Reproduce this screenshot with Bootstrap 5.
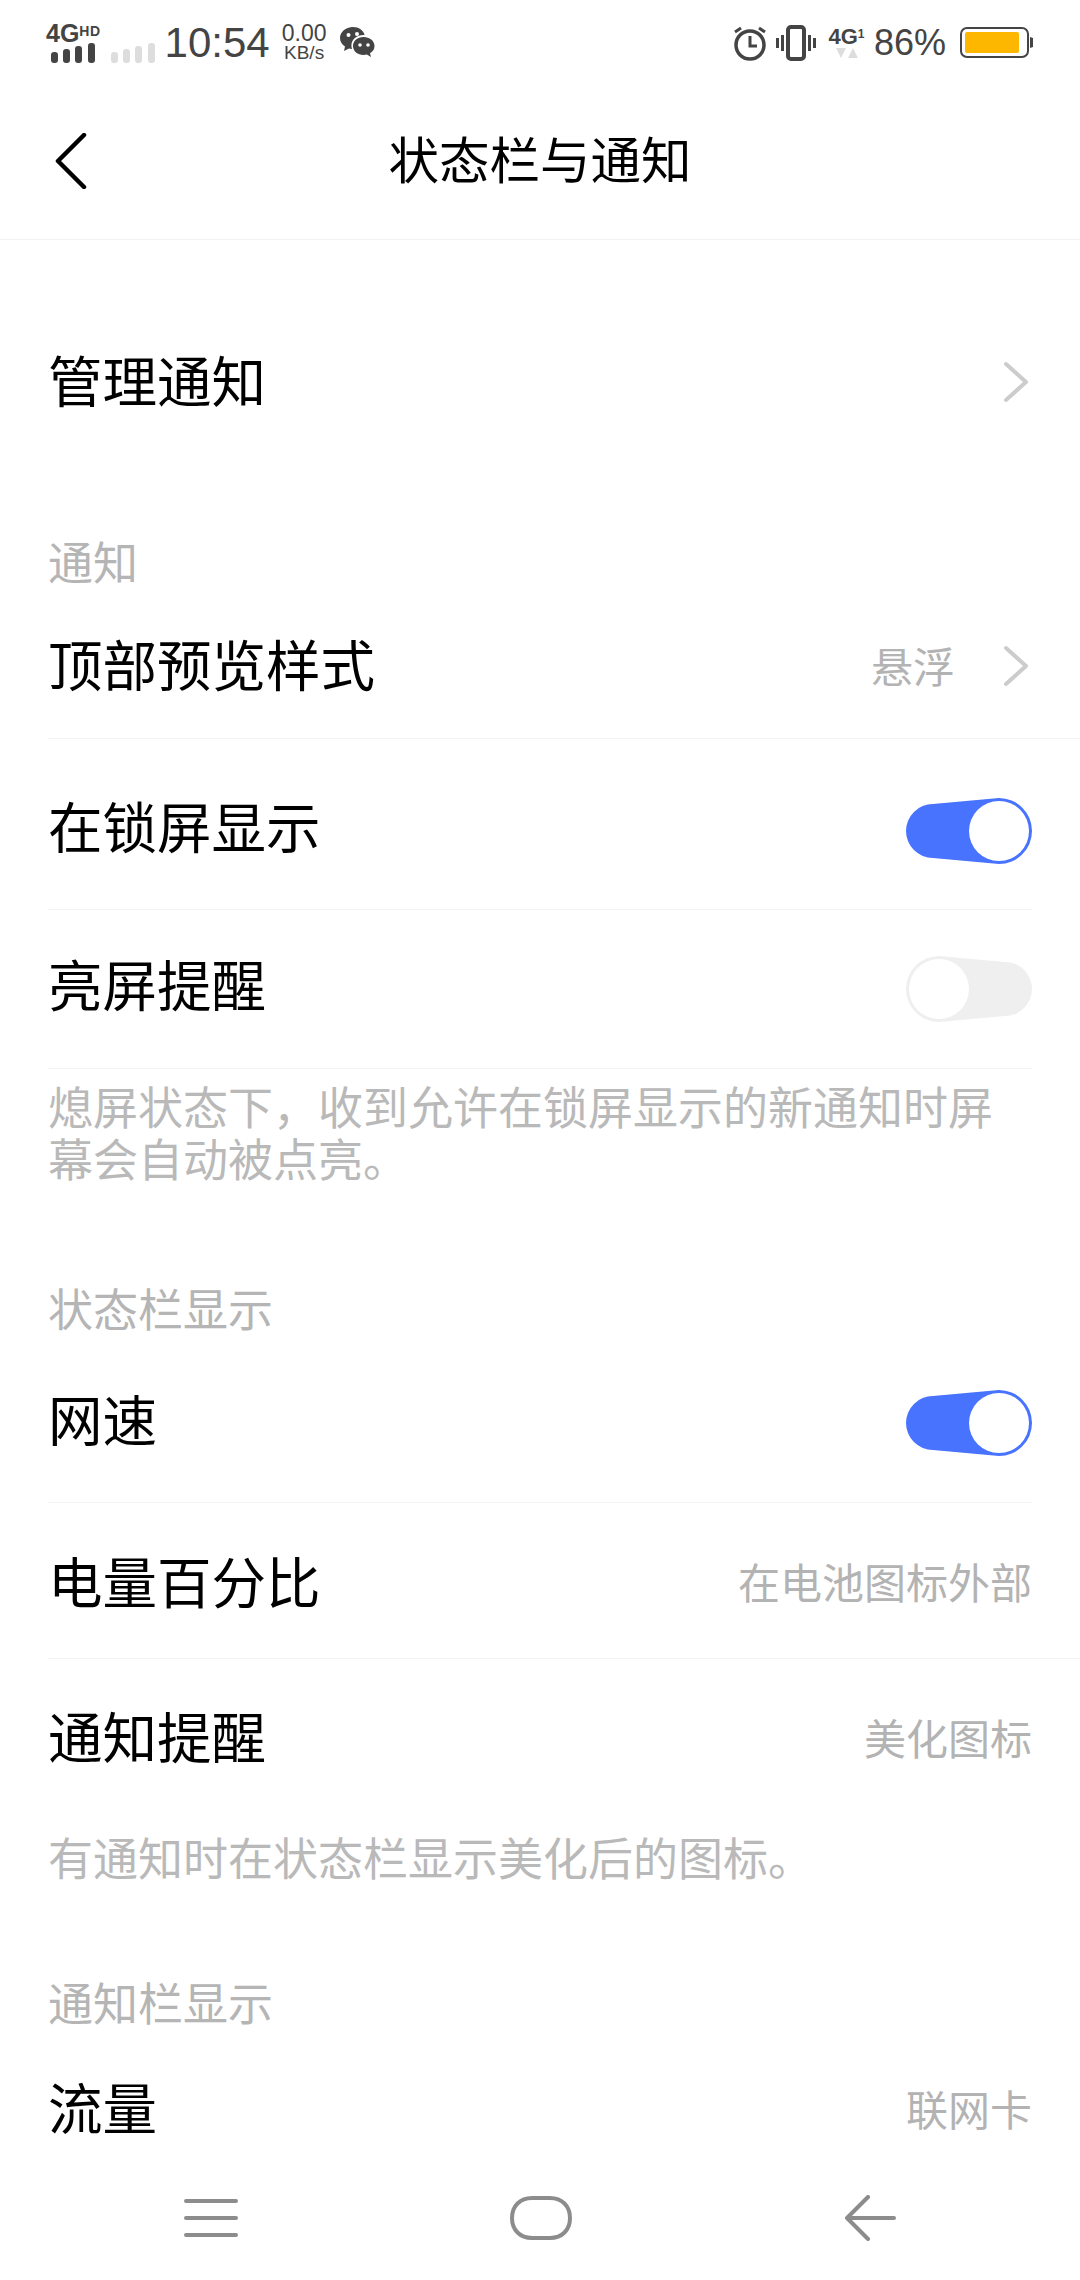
<!DOCTYPE html>
<html lang="zh">
<head>
<meta charset="utf-8">
<title>状态栏与通知</title>
<link rel="stylesheet" href="https://cdn.jsdelivr.net/npm/bootstrap@5.3.2/dist/css/bootstrap.min.css">
<style>
  html, body { height: 2280px; overflow: hidden; background: #fff; }
  body { font-family: "Liberation Sans", "Noto Sans CJK SC", sans-serif; color: #000; }
  .screen { height: 2280px; }
  .status-bar { height: 84px; padding: 2px 46px 0; color: #444; }
  .status-bar svg { display: block; flex: none; }
  .net-type { font-weight: 700; font-size: 25px; line-height: 20px; white-space: nowrap; }
  .net-type sup { font-size: 14px; top: -6px; vertical-align: baseline; position: relative; letter-spacing: .5px; }
  .net-bars { margin-left: 5px; }
  .net-bars-off { margin: 20px 0 0 10px; }
  .clock { font-size: 42px; line-height: 1; margin-left: 10px; }
  .speed { font-size: 23px; line-height: 19px; margin-left: 12px; text-align: center; }
  .speed-unit { font-size: 19px; }
  .chat-icon { margin-left: 13px; }
  .alarm-icon { margin-right: 8px; }
  .sim-type { margin: 0 9px 0 12px; }
  .sim-type .net-type { font-size: 22px; }
  .sim-type .net-type sup { font-size: 12px; }
  .batt-pct { font-size: 36px; line-height: 1; margin-right: 14px; }
  .page-head { height: 157px; padding-top: 3px; border-bottom: 1px solid #f2f2f2; }
  .page-title { font-size: 50.500px; font-weight: 400; margin: 0; }
  .head-back { position: absolute; left: 55px; top: 50%; transform: translateY(-50%); }
  .set-list { min-height: 0; }
  .set-row { padding: 0 48px; font-size: 54.500px; line-height: 1; }
  .row-manage { height: 100px; margin-top: 95px; }
  .row-top { height: 139px; }
  .row-lock { height: 171px; padding-top: 14px; }
  .row-wake { height: 159px; }
  .row-speed { height: 158px; }
  .row-batt { height: 156px; padding-top: 10px; }
  .row-remind { height: 130px; padding-top: 34px; }
  .row-flow { height: 100px; }
  .rule-full { border-bottom: 1px solid #f4f4f4; margin-left: 48px; padding-left: 0; }
  .rule-inset { border-bottom: 1px solid #f4f4f4; margin: 0 48px; padding-left: 0; padding-right: 0; }
  .group-title { padding: 0 48px; font-size: 45px; line-height: 1; color: #b5b5b5; }
  .title-notify { margin-top: 107px; height: 58px; }
  .title-bar { margin-top: 71px; height: 56px; }
  .title-panel { margin-top: 96px; height: 79px; }
  .set-value { font-size: 42px; color: #b3b3b3; }
  .set-note { padding: 0 48px; font-size: 45px; line-height: 52px; color: #b9b9b9; }
  .note-wake { margin-top: 15px; height: 134px; }
  .note-remind { height: 98px; }
  .nav-foot { height: 130px; background: #fff; padding: 6px 184px 0; }
  .nav-foot svg { display: block; }
  .go-arrow { margin-right: 3px; margin-top: -6px; }
</style>
</head>
<body>
<div class="screen d-flex flex-column">

  <div class="status-bar d-flex align-items-center justify-content-between">
    <div class="d-flex align-items-center">
      <div class="d-flex flex-column">
        <div class="net-type">4G<sup>HD</sup></div>
        <svg class="net-bars" width="44" height="20" viewBox="0 0 44 20" fill="#444"><rect x="0" y="9" width="7" height="11" rx="3"/><rect x="12" y="6" width="7" height="14" rx="3"/><rect x="24" y="3" width="7" height="17" rx="3"/><rect x="37" y="0" width="7" height="20" rx="3"/></svg>
      </div>
      <svg class="net-bars-off" width="44" height="20" viewBox="0 0 44 20" fill="#ddd"><rect x="0" y="9" width="7" height="11" rx="3"/><rect x="12" y="6" width="7" height="14" rx="3"/><rect x="24" y="3" width="7" height="17" rx="3"/><rect x="37" y="0" width="7" height="20" rx="3"/></svg>
      <div class="clock">10:54</div>
      <div class="speed"><div>0.00</div><div class="speed-unit">KB/s</div></div>
      <svg class="chat-icon" width="36" height="36" viewBox="0 0 36 36" fill="#444">
        <path d="M14 2C6.500 2 1 7 1 13c0 3.500 1.800 6.500 5 8.500L5 26l5-2.600c1 .3 2 .4 3 .5-.4-1.200-.6-2.300-.6-3.500 0-6 5.400-10.400 12-10.400h1.200C24.500 5.500 19.800 2 14 2z"/>
        <path d="M24.500 12C18.700 12 14 15.800 14 21s4.700 9 10.500 9c1.200 0 2.300-.2 3.400-.5L32 32l-1-3.700c2.900-1.700 4.500-4.300 4.500-7.300 0-5.200-5-9-11-9z"/>
        <circle cx="9.500" cy="10" r="2" fill="#fff"/><circle cx="18" cy="9" r="2" fill="#fff"/>
        <circle cx="21" cy="20" r="1.800" fill="#fff"/><circle cx="29" cy="20" r="1.800" fill="#fff"/>
      </svg>
    </div>
    <div class="d-flex align-items-center">
      <svg class="alarm-icon" width="36" height="36" viewBox="0 0 36 36" fill="none" stroke="#444" stroke-width="3.500">
        <circle cx="18" cy="20" r="14"/><path d="M18 11v10h7" stroke-width="3"/><path d="M3 7l6-4M33 7l-6-4" stroke-width="3"/>
      </svg>
      <svg width="40" height="36" viewBox="0 0 40 36" fill="none" stroke="#444">
        <rect x="12" y="2" width="16" height="32" rx="3" stroke-width="4"/><path d="M6.500 10v16M33.500 10v16" stroke-width="3"/><path d="M1.500 13v10M38.500 13v10" stroke-width="3"/>
      </svg>
      <div class="sim-type d-flex flex-column align-items-center">
        <div class="net-type">4G<sup>1</sup></div>
        <svg width="22" height="12" viewBox="0 0 22 12" fill="#ddd"><path d="M0 1h10l-5 10zM12 11h10l-5-10z"/></svg>
      </div>
      <div class="batt-pct">86%</div>
      <svg width="74" height="32" viewBox="0 0 74 32">
        <rect x="1" y="1" width="67" height="29" rx="6" fill="#fff" stroke="#444" stroke-width="2"/>
        <rect x="5" y="5" width="54" height="21" rx="2" fill="#fdb700"/>
        <path d="M70 10l3 1v9l-3 1z" fill="#444"/>
      </svg>
    </div>
  </div>

  <header class="page-head position-relative d-flex align-items-center justify-content-center">
    <svg class="head-back" width="32" height="56" viewBox="0 0 32 56" fill="none" stroke="#000" stroke-width="4.500" stroke-linecap="round" stroke-linejoin="round"><path d="M29 2L3 28l26 26"/></svg>
    <h1 class="page-title">状态栏与通知</h1>
  </header>

  <main class="set-list flex-grow-1 overflow-hidden">
    <div class="set-row row-manage d-flex align-items-center justify-content-between">
      <span>管理通知</span>
      <svg class="go-arrow" width="26" height="42" viewBox="0 0 26 42" fill="none" stroke="#ccc" stroke-width="4" stroke-linecap="round" stroke-linejoin="round"><path d="M3 3l20 18L3 39"/></svg>
    </div>

    <div class="group-title title-notify">通知</div>
    <div class="set-row row-top rule-full d-flex align-items-center justify-content-between">
      <span>顶部预览样式</span>
      <div class="d-flex align-items-center gap-5">
        <span class="set-value">悬浮</span>
        <svg class="go-arrow" width="26" height="42" viewBox="0 0 26 42" fill="none" stroke="#ccc" stroke-width="4" stroke-linecap="round" stroke-linejoin="round"><path d="M3 3l20 18L3 39"/></svg>
      </div>
    </div>
    <div class="set-row row-lock rule-inset d-flex align-items-center justify-content-between">
      <span>在锁屏显示</span>
      <svg width="126" height="66" viewBox="0 0 126 66"><path d="M27 6L93 0a33 33 0 0 1 0 66L27 60A27 27 0 0 1 27 6z" fill="#4773ff"/><circle cx="93" cy="33" r="30" fill="#fff"/></svg>
    </div>
    <div class="set-row row-wake rule-inset d-flex align-items-center justify-content-between">
      <span>亮屏提醒</span>
      <svg width="126" height="66" viewBox="0 0 126 66"><path d="M33 0L99 6a27 27 0 0 1 0 54L33 66A33 33 0 0 1 33 0z" fill="#efefef"/><circle cx="33" cy="33" r="30" fill="#fff"/></svg>
    </div>
    <div class="set-note note-wake">熄屏状态下，收到允许在锁屏显示的新通知时屏幕会自动被点亮。</div>

    <div class="group-title title-bar">状态栏显示</div>
    <div class="set-row row-speed rule-inset d-flex align-items-center justify-content-between">
      <span>网速</span>
      <svg width="126" height="66" viewBox="0 0 126 66"><path d="M27 6L93 0a33 33 0 0 1 0 66L27 60A27 27 0 0 1 27 6z" fill="#4773ff"/><circle cx="93" cy="33" r="30" fill="#fff"/></svg>
    </div>
    <div class="set-row row-batt rule-full d-flex align-items-center justify-content-between">
      <span>电量百分比</span>
      <span class="set-value">在电池图标外部</span>
    </div>
    <div class="set-row row-remind d-flex align-items-center justify-content-between">
      <span>通知提醒</span>
      <span class="set-value">美化图标</span>
    </div>
    <div class="set-note note-remind d-flex align-items-end">有通知时在状态栏显示美化后的图标。</div>

    <div class="group-title title-panel">通知栏显示</div>
    <div class="set-row row-flow d-flex align-items-center justify-content-between">
      <span>流量</span>
      <span class="set-value">联网卡</span>
    </div>
  </main>

  <nav class="nav-foot d-flex align-items-center justify-content-between">
    <svg width="54" height="40" viewBox="0 0 54 40" fill="none" stroke="#8c8c8c" stroke-width="4" stroke-linecap="round"><path d="M2 3h50M2 20h50M2 37h50"/></svg>
    <svg width="62" height="44" viewBox="0 0 62 44" fill="none" stroke="#8c8c8c" stroke-width="4"><path d="M22 2h18c12 0 20 8 20 20s-8 20-20 20H22C10 42 2 34 2 22S10 2 22 2z"/></svg>
    <svg width="52" height="46" viewBox="0 0 52 46" fill="none" stroke="#8c8c8c" stroke-width="4" stroke-linecap="round" stroke-linejoin="round"><path d="M24 2L3 23l21 21M3 23h47"/></svg>
  </nav>
</div>
<script src="https://cdn.jsdelivr.net/npm/bootstrap@5.3.2/dist/js/bootstrap.bundle.min.js"></script>
</body>
</html>
